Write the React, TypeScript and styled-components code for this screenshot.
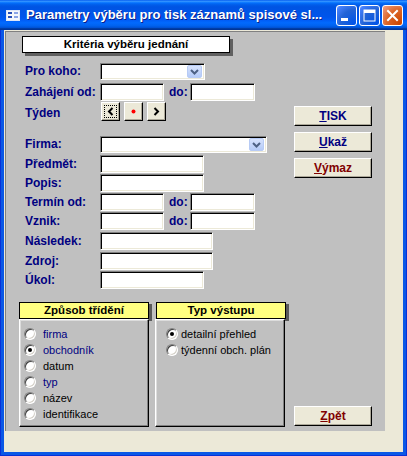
import React from 'react';
import styled, { createGlobalStyle } from 'styled-components';

const Global = createGlobalStyle`
  html, body { margin: 0; padding: 0; background: #ffffff; }
  body { font-family: "Liberation Sans", Arial, sans-serif; }
  #root { width: 407px; height: 456px; }
`;

const Frame = styled.div`
  width: 407px;
  height: 456px;
  display: flex;
  flex-direction: column;
  background: #0a58e6;
  box-sizing: border-box;
`;

const TitleBar = styled.div`
  height: 30px;
  flex: none;
  display: flex;
  align-items: center;
  padding: 0 4px 0 6px;
  box-sizing: border-box;
  background: linear-gradient(to bottom, #0058ee 0%, #3593ff 4%, #288eff 6%, #127dff 8%, #036ffc 10%, #0262ee 14%, #0057e5 20%, #0054e3 24%, #0055eb 56%, #005bf5 66%, #026afe 76%, #0062ef 86%, #0052d6 92%, #0040ab 94%, #003092 100%);
`;

const TitleText = styled.div`
  flex: 1;
  margin-left: 6px;
  color: #ffffff;
  font: bold 13px "Liberation Sans", Arial, sans-serif;
  text-shadow: 1px 1px 0 #0a1f8a;
  white-space: nowrap;
  overflow: hidden;
  padding-bottom: 1px;
`;

const WinButtons = styled.div`
  display: flex;
  gap: 2px;
  margin-top: 1px;
`;

const WinBtn = styled.div<{ $close?: boolean }>`
  width: 21px;
  height: 21px;
  box-sizing: border-box;
  border: 1px solid #ffffff;
  border-radius: 3px;
  display: flex;
  align-items: center;
  justify-content: center;
  background: ${(p) =>
    p.$close
      ? 'radial-gradient(circle at 90% 90%, #cc4600 0%, #dc6527 55%, #f0a088 100%)'
      : 'radial-gradient(circle at 90% 90%, #0054e9 0%, #2263d5 55%, #4882ff 90%, #b6ccf7 100%)'};
`;

const Body = styled.div`
  flex: 1;
  display: flex;
  padding: 0 4px 4px 4px;
  box-shadow: inset 1px 0 0 #0831d9, inset -1px 0 0 #0831d9, inset 0 -1px 0 #0831d9;
`;

const Client = styled.div`
  flex: 1;
  background: #ece9d8;
  padding: 1px 0 0 1px;
`;

const FormArea = styled.div`
  width: 380px;
  height: 400px;
  box-sizing: border-box;
  background: #c0c0c0;
  border-top: 1px solid #808080;
  border-left: 1px solid #808080;
  padding-top: 4px;
  display: flex;
  flex-direction: column;
`;

const HeaderBox = styled.div`
  margin-left: 16px;
  width: 208px;
  height: 17px;
  box-sizing: border-box;
  border: 1px solid #000000;
  background: #ffffff;
  box-shadow: 3px 3px 0 #606060;
  font: bold 11.5px "Liberation Sans", Arial, sans-serif;
  color: #000000;
  text-align: center;
  line-height: 15px;
`;

const MainRow = styled.div`
  display: flex;
  margin-top: 10px;
`;

const Fields = styled.div`
  margin-left: 19px;
  width: 269px;
  display: flex;
  flex-direction: column;
`;

const Row = styled.div<{ $h: number }>`
  height: ${(p) => p.$h}px;
  display: flex;
  align-items: flex-start;
`;

const Label = styled.div<{ $lh?: number; $pt?: number }>`
  width: 75px;
  flex: none;
  font: bold 12px "Liberation Sans", Arial, sans-serif;
  color: #000080;
  line-height: ${(p) => p.$lh ?? 18}px;
  padding-top: ${(p) => p.$pt ?? 0}px;
  white-space: nowrap;
`;

const DoLabel = styled.div`
  width: 21px;
  margin-left: 5px;
  font: bold 12px "Liberation Sans", Arial, sans-serif;
  color: #000080;
  line-height: 18px;
`;

const TextBox = styled.div<{ $w: number; $h?: number }>`
  width: ${(p) => p.$w}px;
  height: ${(p) => p.$h ?? 18}px;
  box-sizing: border-box;
  background: #ffffff;
  border-style: solid;
  border-width: 1px;
  border-color: #808080 #ffffff #ffffff #808080;
  box-shadow: inset 1px 1px 0 #000000, inset -1px -1px 0 #ece9d8;
  display: flex;
  justify-content: flex-end;
  align-items: center;
  padding-right: 2px;
`;

const DropBtn = styled.div`
  width: 15px;
  height: 13px;
  box-sizing: border-box;
  border-radius: 2px;
  background: linear-gradient(to bottom, #d6e2fd, #b5cbf8);
  border: 1px solid #b7cbf5;
  display: flex;
  align-items: center;
  justify-content: center;
`;

const WeekBtns = styled.div`
  display: flex;
  gap: 4px;
  margin-left: 1px;
`;

const WeekBtn = styled.div<{ $focus?: boolean }>`
  width: 19px;
  height: 19px;
  box-sizing: border-box;
  background: #ece9d8;
  border-style: solid;
  border-width: 1px;
  border-color: #ffffff #000000 #000000 #ffffff;
  box-shadow: inset -1px -1px 0 #aca899;
  display: flex;
  align-items: center;
  justify-content: center;
  position: relative;
  ${(p) =>
    p.$focus
      ? `&::after { content: ''; position: absolute; left: 2px; top: 2px; right: 2px; bottom: 2px; border: 1px dotted #000; }`
      : ''}
`;

const RedDot = styled.span`
  width: 3px;
  height: 3px;
  border-radius: 50%;
  background: #ff0000;
  box-shadow: 0 0 0 0.5px #ff0000;
`;

const SideButtons = styled.div`
  margin-top: 43px;
  display: flex;
  flex-direction: column;
  gap: 6px;
`;

const CmdButton = styled.div<{ $color: string }>`
  width: 78px;
  height: 20px;
  box-sizing: border-box;
  background: #ece9d8;
  border-style: solid;
  border-width: 1px;
  border-color: #ffffff #000000 #000000 #ffffff;
  box-shadow: inset -1px -1px 0 #aca899;
  font: bold 12px "Liberation Sans", Arial, sans-serif;
  color: ${(p) => p.$color};
  display: flex;
  align-items: center;
  justify-content: center;
  padding-bottom: 1px;
  u { text-decoration-thickness: 1px; text-underline-offset: 1px; }
`;

const GroupsRow = styled.div`
  display: flex;
  align-items: flex-end;
  margin-top: 12px;
  padding-left: 13px;
`;

const Group = styled.div<{ $ml: number }>`
  width: 131px;
  margin-left: ${(p) => p.$ml}px;
  display: flex;
  flex-direction: column;
`;

const GroupHeader = styled.div<{ $shift: number }>`
  width: 130px;
  height: 17px;
  margin-left: ${(p) => p.$shift}px;
  box-sizing: border-box;
  background: #ffff80;
  border: 1px solid #000000;
  box-shadow: 3px 2px 0 #5a5a5a;
  font: bold 11.5px "Liberation Sans", Arial, sans-serif;
  color: #000000;
  text-align: center;
  line-height: 15px;
`;

const GroupPanel = styled.div<{ $pl: number }>`
  width: 130px;
  height: 108px;
  box-sizing: border-box;
  background: #c0c0c0;
  border-style: solid;
  border-width: 1px;
  border-color: #ffffff #000000 #000000 #ffffff;
  box-shadow: inset -1px -1px 0 #808080, inset 1px 1px 0 #dcdcdc;
  padding: 6px 0 0 ${(p) => p.$pl}px;
  display: flex;
  flex-direction: column;
`;

const RadioItem = styled.div<{ $color: string; $gap: number }>`
  height: 16px;
  display: flex;
  align-items: center;
  gap: ${(p) => p.$gap}px;
  font: 11px "Liberation Sans", Arial, sans-serif;
  color: ${(p) => p.$color};
  white-space: nowrap;
`;

const RadioCircle = styled.span<{ $on?: boolean }>`
  width: 12px;
  height: 12px;
  flex: none;
  box-sizing: border-box;
  border-radius: 50%;
  background: #ffffff;
  border: 1px solid;
  border-color: #808080 #ffffff #ffffff #808080;
  box-shadow: inset 1px 1px 0 #404040, inset -1px -1px 0 #d4d0c8;
  display: flex;
  align-items: center;
  justify-content: center;
  &::after {
    content: '';
    width: 4px;
    height: 4px;
    border-radius: 50%;
    background: ${(p) => (p.$on ? '#000000' : 'transparent')};
  }
`;

const BackButton = styled(CmdButton)`
  margin-left: 8px;
  margin-bottom: 1px;
`;

const Chevron = () => (
  <svg width="9" height="6" viewBox="0 0 9 6">
    <polyline points="1,1 4.5,4.5 8,1" fill="none" stroke="#4d6185" strokeWidth="2" />
  </svg>
);

const Arrow = ({ dir }: { dir: 'l' | 'r' }) => (
  <svg width="7" height="9" viewBox="0 0 7 9">
    <polyline
      points={dir === 'l' ? '5.5,1 2,4.5 5.5,8' : '1.5,1 5,4.5 1.5,8'}
      fill="none"
      stroke="#000000"
      strokeWidth="2"
    />
  </svg>
);

const FormIcon = () => (
  <svg width="14" height="11" viewBox="0 0 14 11">
    <rect x="0.5" y="0.5" width="13" height="10" fill="#f4f6fc" stroke="#dfe6f7" />
    <rect x="2" y="2" width="4" height="2" fill="#2a4fb8" />
    <rect x="8" y="2" width="4" height="2" fill="#8aa3e6" />
    <rect x="2" y="6" width="4" height="2" fill="#2a4fb8" />
    <rect x="8" y="6" width="4" height="2" fill="#8aa3e6" />
  </svg>
);

type RowDef = { label: string; h: number; w: number; do?: boolean; combo?: boolean };

const topRows: RowDef[] = [
  { label: 'Pro koho:', h: 20, w: 105, combo: true },
  { label: 'Zahájení od:', h: 19, w: 64, do: true },
];

const bottomRows: RowDef[] = [
  { label: 'Firma:', h: 19, w: 167, combo: true },
  { label: 'Předmět:', h: 19, w: 104 },
  { label: 'Popis:', h: 19, w: 104 },
  { label: 'Termín od:', h: 19, w: 64, do: true },
  { label: 'Vznik:', h: 20, w: 64, do: true },
  { label: 'Následek:', h: 20, w: 113 },
  { label: 'Zdroj:', h: 19, w: 113 },
  { label: 'Úkol:', h: 19, w: 104 },
];

const FieldRow = ({ r }: { r: RowDef }) => (
  <Row $h={r.h}>
    <Label $lh={r.combo ? 17 : 18}>{r.label}</Label>
    <TextBox $w={r.w} $h={r.combo ? 17 : 18}>
      {r.combo && (
        <DropBtn>
          <Chevron />
        </DropBtn>
      )}
    </TextBox>
    {r.do && (
      <>
        <DoLabel>do:</DoLabel>
        <TextBox $w={65} />
      </>
    )}
  </Row>
);

const sortItems = [
  { t: 'firma', c: '#000080' },
  { t: 'obchodník', c: '#000080', on: true },
  { t: 'datum', c: '#000000' },
  { t: 'typ', c: '#000080' },
  { t: 'název', c: '#000000' },
  { t: 'identifikace', c: '#000000' },
];

const outItems = [
  { t: 'detailní přehled', c: '#000000', on: true },
  { t: 'týdenní obch. plán', c: '#000000' },
];

export default function App() {
  return (
    <>
      <Global />
      <Frame>
        <TitleBar>
          <FormIcon />
          <TitleText>Parametry výběru pro tisk záznamů spisové sl...</TitleText>
          <WinButtons>
            <WinBtn>
              <svg width="19" height="19" viewBox="0 0 19 19">
                <rect x="4" y="12" width="7" height="3" fill="#ffffff" />
              </svg>
            </WinBtn>
            <WinBtn>
              <svg width="19" height="19" viewBox="0 0 19 19">
                <rect x="4" y="4" width="11" height="11" fill="none" stroke="#ffffff" strokeWidth="1" />
                <rect x="4" y="4" width="11" height="3" fill="#ffffff" />
              </svg>
            </WinBtn>
            <WinBtn $close>
              <svg width="19" height="19" viewBox="0 0 19 19">
                <path d="M5 5 L14 14 M14 5 L5 14" stroke="#ffffff" strokeWidth="2" strokeLinecap="square" />
              </svg>
            </WinBtn>
          </WinButtons>
        </TitleBar>
        <Body>
          <Client>
            <FormArea>
              <HeaderBox>Kritéria výběru jednání</HeaderBox>
              <MainRow>
                <Fields>
                  {topRows.map((r) => (
                    <FieldRow key={r.label} r={r} />
                  ))}
                  <Row $h={34}>
                    <Label $lh={19} $pt={2}>Týden</Label>
                    <WeekBtns>
                      <WeekBtn $focus>
                        <Arrow dir="l" />
                      </WeekBtn>
                      <WeekBtn>
                        <RedDot />
                      </WeekBtn>
                      <WeekBtn>
                        <Arrow dir="r" />
                      </WeekBtn>
                    </WeekBtns>
                  </Row>
                  {bottomRows.map((r) => (
                    <FieldRow key={r.label} r={r} />
                  ))}
                </Fields>
                <SideButtons>
                  <CmdButton $color="#000080">
                    <u>T</u>ISK
                  </CmdButton>
                  <CmdButton $color="#000080">
                    <u>U</u>kaž
                  </CmdButton>
                  <CmdButton $color="#800000">
                    <u>V</u>ýmaz
                  </CmdButton>
                </SideButtons>
              </MainRow>
              <GroupsRow>
                <Group $ml={0}>
                  <GroupHeader $shift={0}>Způsob třídění</GroupHeader>
                  <GroupPanel $pl={4}>
                    {sortItems.map((i) => (
                      <RadioItem key={i.t} $color={i.c} $gap={7}>
                        <RadioCircle $on={i.on} />
                        {i.t}
                      </RadioItem>
                    ))}
                  </GroupPanel>
                </Group>
                <Group $ml={5}>
                  <GroupHeader $shift={1}>Typ výstupu</GroupHeader>
                  <GroupPanel $pl={10}>
                    {outItems.map((i) => (
                      <RadioItem key={i.t} $color={i.c} $gap={3}>
                        <RadioCircle $on={i.on} />
                        {i.t}
                      </RadioItem>
                    ))}
                  </GroupPanel>
                </Group>
                <BackButton $color="#800000">
                  <u>Z</u>pět
                </BackButton>
              </GroupsRow>
            </FormArea>
          </Client>
        </Body>
      </Frame>
    </>
  );
}
